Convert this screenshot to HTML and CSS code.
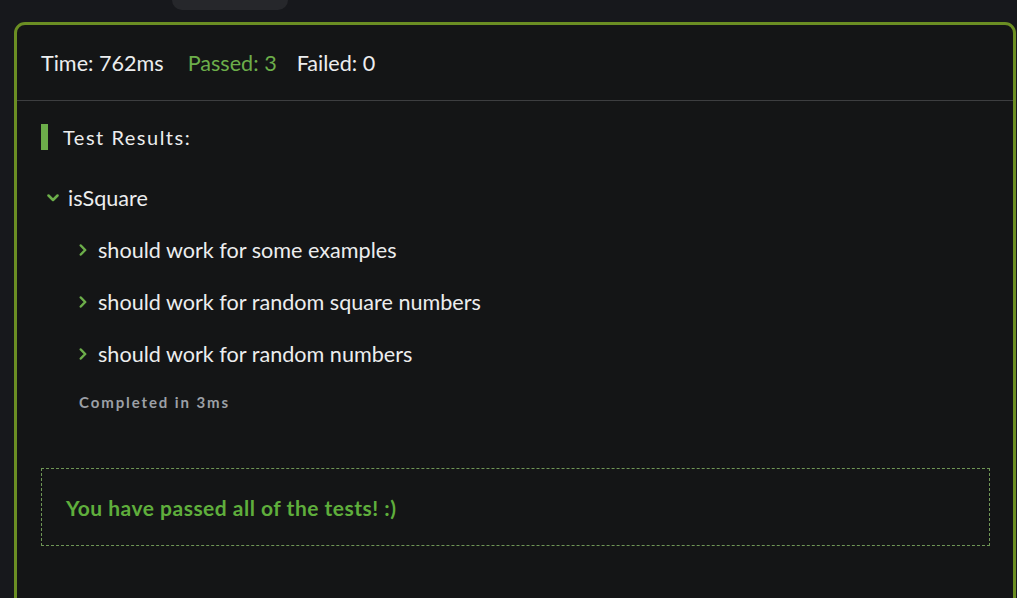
FILE: index.html
```html
<!DOCTYPE html>
<html lang="en">
<head>
<meta charset="utf-8">
<title>Test Results</title>
<link rel="stylesheet" href="styles.css">
</head>
<body>
<div class="tabbar"><div class="tab"></div></div>
<section class="panel">
  <header class="stats">
    <span class="stat">Time: 762ms</span>
    <span class="stat passed">Passed: 3</span>
    <span class="stat">Failed: 0</span>
  </header>
  <div class="content">
    <h2 class="results-title">Test Results:</h2>
    <div class="suite">
      <div class="row suite-row">
        <svg class="chev-down" width="12" height="8" viewBox="0 0 12 8"><path d="M1.5 1.5 L6 6 L10.5 1.5" fill="none" stroke="#6cae4a" stroke-width="2.5" stroke-linecap="round" stroke-linejoin="round"/></svg>
        <span>isSquare</span>
      </div>
      <div class="children">
        <div class="row test-row">
          <svg class="chev-right" width="8" height="12" viewBox="0 0 8 12"><path d="M1.8 1.5 L6.2 6 L1.8 10.5" fill="none" stroke="#6cae4a" stroke-width="2.5" stroke-linecap="round" stroke-linejoin="round"/></svg>
          <span>should work for some examples</span>
        </div>
        <div class="row test-row">
          <svg class="chev-right" width="8" height="12" viewBox="0 0 8 12"><path d="M1.8 1.5 L6.2 6 L1.8 10.5" fill="none" stroke="#6cae4a" stroke-width="2.5" stroke-linecap="round" stroke-linejoin="round"/></svg>
          <span>should work for random square numbers</span>
        </div>
        <div class="row test-row">
          <svg class="chev-right" width="8" height="12" viewBox="0 0 8 12"><path d="M1.8 1.5 L6.2 6 L1.8 10.5" fill="none" stroke="#6cae4a" stroke-width="2.5" stroke-linecap="round" stroke-linejoin="round"/></svg>
          <span>should work for random numbers</span>
        </div>
        <div class="completed">Completed in 3ms</div>
      </div>
    </div>
    <div class="success">You have passed all of the tests! :)</div>
  </div>
</section>
</body>
</html>
```
FILE: styles.css
```css
* { box-sizing: border-box; }
html, body {
  margin: 0;
  padding: 0;
  background: #17181c;
  overflow: hidden;
  height: 598px;
}
body {
  font-family: Lato, "Noto Sans", sans-serif;
  color: #ecedee;
}
.tabbar {
  height: 10px;
  display: flex;
}
.tab {
  margin-left: 172px;
  width: 116px;
  height: 10px;
  background: #26272b;
  border-radius: 0 0 10px 10px;
}
.panel {
  margin: 12px 1px 0 14px;
  height: 620px;
  background: #141516;
  border: 3px solid #6b8e23;
  border-radius: 11px;
}
.stats {
  height: 76px;
  display: flex;
  align-items: center;
  padding-left: 24px;
  border-bottom: 1px solid #3d3e40;
  font-size: 21.6px;
}
.stat { margin-right: 24px; }
.stat.passed { color: #6cae4a; margin-right: 20px; }
.content {
  padding: 23px 23px 0 24px;
}
.results-title {
  margin: 0;
  height: 26px;
  border-left: 7px solid #6cae4a;
  padding-left: 15px;
  font-size: 20px;
  font-weight: 400;
  letter-spacing: 1.5px;
  line-height: 26px;
}
.suite { margin-top: 22px; }
.row {
  height: 52px;
  display: flex;
  align-items: center;
  font-size: 21.6px;
}
.suite-row { padding-left: 6px; }
.chev-down { margin-right: 9px; }
.children { padding-left: 38px; }
.chev-right { margin-right: 11px; }
.completed {
  margin-top: 12px;
  height: 20px;
  line-height: 20px;
  font-size: 15px;
  font-weight: 700;
  letter-spacing: 1.9px;
  color: #9ca0a6;
}
.success {
  margin-top: 56px;
  height: 78px;
  border: 1px dashed #6f9656;
  display: flex;
  align-items: center;
  padding-left: 24px;
  font-size: 21px;
  font-weight: 700;
  letter-spacing: 0.5px;
  color: #5fae3c;
}
```
